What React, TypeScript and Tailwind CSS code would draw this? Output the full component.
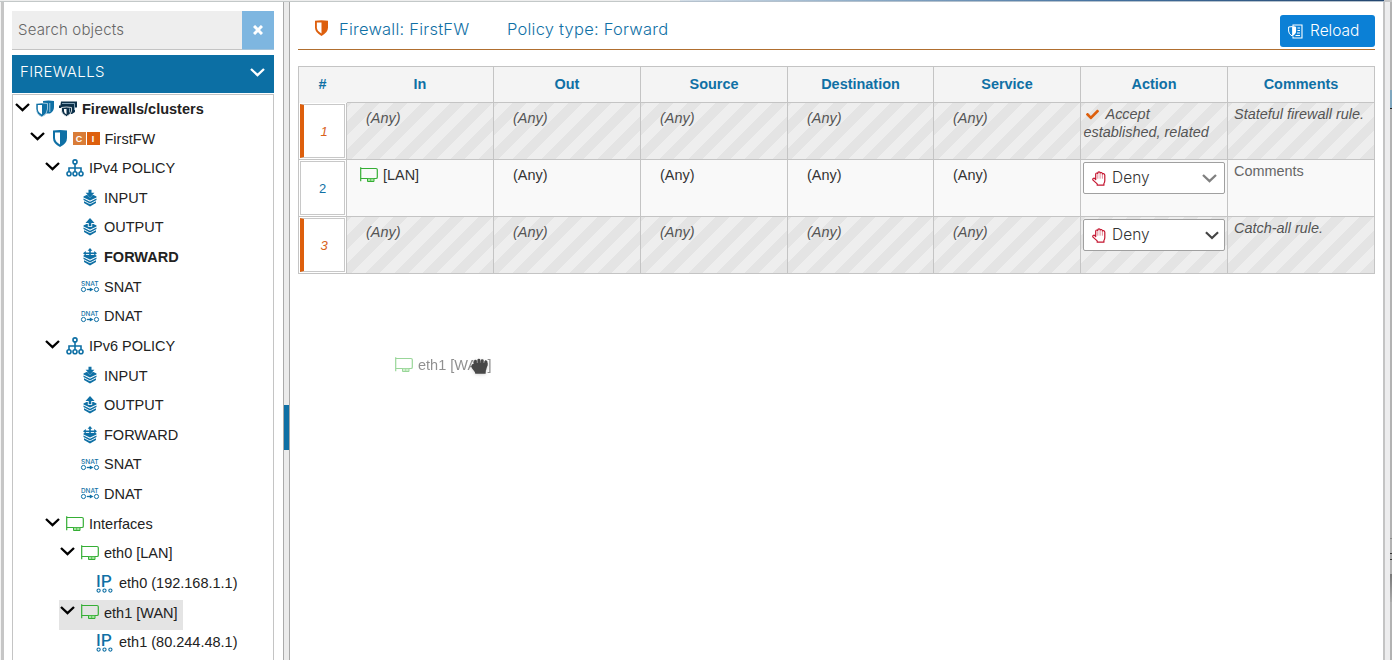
import type { ReactNode } from "react";
import { FaCheck } from "react-icons/fa";

const BLUE = "#0f70a5";

function Chevron({ className }: { className?: string }) {
  return (
    <svg viewBox="0 0 15 9" className={className} fill="none" stroke="currentColor" strokeWidth="2.3">
      <path d="M1 1l6.5 6.2L14 1" />
    </svg>
  );
}

function Shield({ color, className }: { color: string; className?: string }) {
  return (
    <svg viewBox="0 0 14 17" className={className}>
      <path d="M0 .6Q7-.4 14 .6V8q0 5.5-7 9Q0 13.500 0 8z" fill={color} />
      <path d="M2 2.500h5v12Q2 11.500 2 8z" fill="#fff" />
    </svg>
  );
}

function FirewallsIcon() {
  return (
    <svg viewBox="0 0 18 17" className="h-[17px] w-[18px]">
      <path d="M7 1q5.500-1 11 0v6q0 4-4 6.500H7z" fill={BLUE} />
      <path d="M13.800 3v9" stroke="#9cc6de" strokeWidth="1" />
      <path d="M0 3.500q6-1 11.500 0V9q0 5-5.700 8Q0 14 0 9z" fill={BLUE} stroke="#fff" strokeWidth=".6" />
      <path d="M1.800 5H6v9.500Q1.800 12 1.800 9z" fill="#fff" />
    </svg>
  );
}

function ClustersIcon() {
  return (
    <svg viewBox="0 0 18 17" className="h-[17px] w-[18px]">
      <path d="M2 1.500h16v6h-2V12l-3 2H5V8H1z" fill="#0c3049" />
      <path d="M3 3.500h12.500M15.500 3.500V10" stroke="#9fc0d4" strokeWidth=".8" fill="none" />
      <path d="M0 5.500h13V8H0z" fill="#0c3049" />
      <path d="M2.500 7.500q5-1 10 0V11q0 3-5 5.500-5-2.500-5-5.500z" fill="#0c3049" stroke="#fff" strokeWidth=".8" />
      <path d="M5 9h2.500v5.500Q5 13 5 11z" fill="#fff" />
      <path d="M10.500 8.500v4" stroke="#9fc0d4" strokeWidth=".8" />
    </svg>
  );
}

function SitemapIcon() {
  return (
    <svg viewBox="0 0 18 18" className="h-[18px] w-[18px]" fill="none" stroke={BLUE} strokeWidth="1.600">
      <circle cx="9" cy="2.900" r="2" />
      <path d="M9 5v8M3 13V9h12v4" />
      <circle cx="3" cy="14.800" r="2" />
      <circle cx="9" cy="14.800" r="2" />
      <circle cx="15" cy="14.800" r="2" />
    </svg>
  );
}

function ChainIcon({ kind }: { kind: "in" | "out" | "fwd" }) {
  return (
    <svg viewBox="0 0 14 18" className="h-[18px] w-[14px]">
      <path d="M1 12.200l6 3 6-3v1.800L7 17.500 1 14z" fill={BLUE} />
      <path d="M.5 9.500L7 12.700l6.500-3.200v1.600L7 14.400.5 11.100z" fill={BLUE} />
      <path d="M.5 7.500L3.500 6h7l3 1.500v.9L7 11.600.5 8.400z" fill={BLUE} />
      {kind === "in" && (
        <g>
          <path d="M5.500.8h3v3h2.900L7 8.400 2.600 3.800h2.900z" fill={BLUE} stroke="#fff" strokeWidth=".7" paintOrder="stroke" />
        </g>
      )}
      {kind === "out" && (
        <g>
          <path d="M4.800 4h4.400v4.800H4.800z" fill="#fff" />
          <path d="M5.700 4h2.600v4H5.700z" fill={BLUE} />
          <path d="M7 0l4.500 5h-9z" fill={BLUE} />
        </g>
      )}
      {kind === "fwd" && (
        <g fill={BLUE}>
          <path d="M2.500 5.900h9v1h-9z" fill="#fff" />
          <path d="M6.200 1.500h1.600v8H6.200zM2 4.400h10V6H2z" />
          <path d="M7 0l2.400 2.800H4.600zM0 5.200l2.800-2.300v4.600zM14 5.200l-2.800-2.300v4.600z" />
        </g>
      )}
    </svg>
  );
}

function NatIcon({ label }: { label: string }) {
  return (
    <svg viewBox="0 0 18 13" className="h-[13px] w-[18px] overflow-visible">
      <text x="0" y="5.600" fontSize="6.500" fontWeight="500" textLength="17.500" lengthAdjust="spacingAndGlyphs" fill={BLUE} className="font-['Inter',sans-serif]">
        {label}
      </text>
      <g fill="none" stroke={BLUE} strokeWidth="1">
        <circle cx="2.500" cy="9.500" r="2.100" />
        <circle cx="15.500" cy="9.500" r="2.100" />
        <path d="M5.800 9.500h4" strokeWidth="1.300" />
      </g>
      <path d="M8.800 7.400l3.700 2.100-3.700 2.100z" fill={BLUE} />
    </svg>
  );
}

function NicIcon() {
  return (
    <svg viewBox="0 0 18 16" className="h-4 w-[18px]" fill="none" stroke="#35ae35">
      <path d="M.7.3v14" strokeWidth="1.200" />
      <path d="M.7 1.500h15.300q1.300 0 1.300 1.300v7.400q0 1.300-1.300 1.300H.7" strokeWidth="1.200" />
      <path d="M7.500 11.800v2.700h6.500v-2.700" fill="#a5e5a0" strokeWidth="1" />
      <path d="M10.700 11.800v2.700" strokeWidth=".7" />
    </svg>
  );
}

function IpIcon() {
  return (
    <svg viewBox="0 -4 18 24" className="h-6 w-[18px] overflow-visible">
      <text x="0" y="12" fontSize="16" fontWeight="500" textLength="16" lengthAdjust="spacingAndGlyphs" fill={BLUE} className="font-['Inter',sans-serif]">
        IP
      </text>
      <g fill="none" stroke={BLUE} strokeWidth="1.100">
        <circle cx="2.600" cy="15.600" r="1.600" />
        <circle cx="8.500" cy="15.600" r="1.600" />
        <circle cx="14.400" cy="15.600" r="1.600" />
      </g>
    </svg>
  );
}

function ReloadIcon() {
  return (
    <svg viewBox="0 0 15 15" className="h-[15px] w-[15px]" fill="none" stroke="#fff">
      <path d="M5 2.500V1h9v13H5v-1.500" strokeWidth="1.100" />
      <path d="M9.500 4H12M9.500 6.500H12M9 9h3M7.500 11.500H12" strokeWidth="1" />
      <path d="M.6 3q3.500-.8 7 0v4q0 3-3.500 5Q.6 10 .6 7z" strokeWidth="1" />
      <path d="M4.100 3H8v4q0 3-3.900 5z" fill="#fff" stroke="none" />
    </svg>
  );
}

function StopHandIcon() {
  return (
    <svg viewBox="0 0 14 15" className="mr-[6px] h-[15px] w-[14px]" fill="none" stroke="#c4142f" strokeLinejoin="round" strokeLinecap="round">
      <path d="M3.700 8.500V3.200q0-1.200 1-1.200t1 .4Q5.800.8 7 .8t1.300 1.100q.3-.5 1.100-.4 1 .2 1 1.500.3-.4 1-.3 1.400.2 1.400 1.600v5.200q0 1.800-.9 3v1.700H5.200v-1.300L1 9.100Q.4 8 1.300 7.400q.9-.5 1.700.4z" strokeWidth="1.200" />
      <path d="M5.800 3v4.300M8.100 2.500v4.800M10.400 3.500v3.800" strokeWidth=".5" />
    </svg>
  );
}

function GrabCursor() {
  return (
    <svg viewBox="0 0 17 17" className="absolute left-[471px] top-[358px] h-[17px] w-[17px] drop-shadow" fill="#484848">
      <path d="M3 5h13.500q.2 3.200-1 5.300-.9 1.500-.9 5.500H4.300q-.1-1.700-1.400-3.100Q.3 10 .3 8.300q0-1.800 1.400-2.300H3z" />
      <rect x="3" y="1.800" width="2.900" height="6" rx="1.400" />
      <rect x="6.400" y=".7" width="2.900" height="6" rx="1.400" />
      <rect x="9.800" y="1.200" width="2.900" height="6" rx="1.400" />
      <rect x="13.200" y="2.400" width="3.300" height="6" rx="1.500" />
    </svg>
  );
}

type Row = { level: number; text: string; icon: ReactNode; open?: boolean; bold?: boolean; selected?: boolean };

const policy: Row[] = [
  { level: 3, text: "INPUT", icon: <ChainIcon kind="in" /> },
  { level: 3, text: "OUTPUT", icon: <ChainIcon kind="out" /> },
  { level: 3, text: "FORWARD", icon: <ChainIcon kind="fwd" /> },
  { level: 3, text: "SNAT", icon: <NatIcon label="SNAT" /> },
  { level: 3, text: "DNAT", icon: <NatIcon label="DNAT" /> },
];

const rows: Row[] = [
  { level: 0, text: "Firewalls/clusters", open: true, bold: true, icon: <span className="flex gap-[5px]"><FirewallsIcon /><ClustersIcon /></span> },
  {
    level: 1, text: "FirstFW", open: true,
    icon: (
      <span className="flex items-center">
        <Shield color={BLUE} className="ml-[1.500px] h-[17px] w-[14px]" />
        <span className="ml-[6px] flex gap-px text-center text-[9px] font-bold leading-[14px] text-white">
          <span className="h-[13px] w-[13px] bg-[#d97c37]">C</span>
          <span className="h-[13px] w-[13px] bg-[#dd5f0d]">I</span>
        </span>
      </span>
    ),
  },
  { level: 2, text: "IPv4 POLICY", open: true, icon: <SitemapIcon /> },
  ...policy.map((r) => ({ ...r, bold: r.text === "FORWARD" })),
  { level: 2, text: "IPv6 POLICY", open: true, icon: <SitemapIcon /> },
  ...policy,
  { level: 2, text: "Interfaces", open: true, icon: <NicIcon /> },
  { level: 3, text: "eth0 [LAN]", open: true, icon: <NicIcon /> },
  { level: 4, text: "eth0 (192.168.1.1)", icon: <IpIcon /> },
  { level: 3, text: "eth1 [WAN]", open: true, selected: true, icon: <NicIcon /> },
  { level: 4, text: "eth1 (80.244.48.1)", icon: <IpIcon /> },
];

const indent = ["ml-px", "ml-4", "ml-[31px]", "ml-[46px]", "ml-[61px]"];

function TreeRow({ row }: { row: Row }) {
  return (
    <div className={`${indent[row.level]} flex h-[29.630px] w-fit shrink-0 items-start whitespace-nowrap pl-px pr-[5px] ${row.selected ? "bg-[#e4e4e4]" : ""}`}>
      <span className="mr-px flex h-[22px] w-5 items-center">{row.open && <Chevron className="h-[9px] w-[15px] text-black" />}</span>
      <span className="mr-[5px] flex h-[25px] min-w-[18px] items-center justify-center">{row.icon}</span>
      <span className={`mt-[.650px] text-[14.500px] leading-[25px] text-[#222] ${row.bold ? "font-bold" : ""}`}>{row.text}</span>
    </div>
  );
}

function Sidebar() {
  return (
    <aside className="flex w-[279px] shrink-0 flex-col bg-white pl-2 pr-[9px] pt-[9px]">
      <div className="flex h-[39px] shrink-0">
        <div className="flex flex-1 items-center border-b border-[#c4c4c4] bg-[#eeeeee] pl-[6px] font-['Inter',sans-serif] text-[15px] font-light tracking-[.17px] text-[#666]">
          Search objects
        </div>
        <div className="flex w-8 items-center justify-center border-b border-[#a5c4da] bg-[#7eb6e0]">
          <svg viewBox="0 0 10 10" className="h-[10px] w-[10px]" stroke="#fff" strokeWidth="3">
            <path d="M1 1l8 8M9 1L1 9" />
          </svg>
        </div>
      </div>
      <div className="mt-[5px] flex h-[38px] shrink-0 items-center justify-between bg-[#0c6fa4] pb-1 pl-2 pr-[9px] font-['Inter',sans-serif] text-[15px] font-light text-white">
        <span className="tracking-[.4px]">FIREWALLS</span>
        <Chevron className="h-[9px] w-[15px]" />
      </div>
      <div className="mt-px flex min-h-0 flex-1 flex-col overflow-hidden border-x border-t border-[#c4c4c4] pt-[1.300px]">
        {rows.map((r, i) => (
          <TreeRow key={i} row={r} />
        ))}
      </div>
    </aside>
  );
}

const columns = ["In", "Out", "Source", "Destination", "Service", "Action", "Comments"];
const stripes = "bg-[repeating-linear-gradient(-45deg,#e4e4e4_0,#e4e4e4_10px,#eeeeee_10px,#eeeeee_20px)]";
const edge = "border-r border-b border-[#c4c4c4]";

function DenySelect({ dark }: { dark?: boolean }) {
  return (
    <div className="ml-[2px] mt-[2px] flex h-8 w-[142px] items-center rounded-[2px] border border-[#a0a0a0] bg-white pl-2 font-['Inter',sans-serif] text-[15.500px] font-light not-italic text-[#333]">
      <StopHandIcon />
      <span className="flex-1">Deny</span>
      <Chevron className={dark ? "mr-[5px] h-[9px] w-[14px] text-[#444]" : "mr-[7px] h-[9px] w-[15px] text-[#808080]"} />
    </div>
  );
}

function Rule({ n, comment }: { n: number; comment: string }) {
  const special = n !== 2;
  const cell = `${edge} h-[57px] ${special ? `${stripes} italic text-[#555]` : "bg-[#f9f9f9] text-[#333]"}`;
  return (
    <>
      <div className={`${edge} bg-white p-px`}>
        <div className={`flex h-full items-center justify-center border border-[#c8c8c8] pt-[2px] text-[13px] ${special ? "border-l-4 border-l-[#dd5f0d] italic text-[#d9621a]" : "text-[#0f70a5]"}`}>
          {n}
        </div>
      </div>
      {columns.slice(0, 5).map((c) => (
        <div key={c} className={`${cell} flex items-start leading-[17px] ${!special && c === "In" ? "pl-[13px] pt-[7px]" : "pl-[19px] pt-[7px]"}`}>
          {!special && c === "In" ? (
            <>
              <span className="mr-[5px]"><NicIcon /></span>[LAN]
            </>
          ) : (
            "(Any)"
          )}
        </div>
      ))}
      <div className={cell}>
        {n === 1 ? (
          <div className="pl-[2.500px] pt-[2px] leading-[18px]">
            <FaCheck className="ml-[2px] mr-[7px] inline h-[13px] w-[13px] align-[-2px] text-[#dd5f0d]" />
            Accept
            <br />
            established, related
          </div>
        ) : (
          <DenySelect dark={n === 3} />
        )}
      </div>
      <div className={`${cell} pl-[6px] pt-[2px] leading-[18px] ${special ? "" : "text-[#666]"}`}>{comment}</div>
    </>
  );
}

function Main() {
  return (
    <main className="flex min-w-0 flex-1 flex-col bg-white px-2">
      <div className="flex h-[47px] shrink-0 items-start">
        <div className="flex h-full flex-1 items-center pb-[2px] pl-[17px] pt-[10px] font-['Inter',sans-serif] text-[16.500px] font-light tracking-[.230px] text-[#0f70a5]">
          <Shield color="#dd5f0d" className="mb-[4px] mr-[11px] h-4 w-[13px]" />
          <span className="w-[168px]">Firewall: FirstFW</span>
          <span>Policy type: Forward</span>
        </div>
        <button className="mt-[13px] flex h-8 w-[95px] items-center rounded-[3px] bg-[#0b80d6] pl-2 font-['Inter',sans-serif] text-[15.500px] font-light text-white">
          <span className="mr-[7px]"><ReloadIcon /></span>Reload
        </button>
      </div>
      <div className="h-px shrink-0 bg-[#b06f30]" />
      <div className="mt-4 grid shrink-0 grid-cols-[48px_147px_147px_147px_146px_147px_147px_147px] border-l border-t border-[#c4c4c4] text-[14.450px]">
        <div className="flex h-9 items-center justify-center bg-[#f4f4f4] pr-px font-bold text-[#0f70a5]">#</div>
        {columns.map((c) => (
          <div key={c} className={`${edge} flex h-9 items-center justify-center bg-[#f4f4f4] font-bold text-[#0f70a5]`}>
            {c}
          </div>
        ))}
        <Rule n={1} comment="Stateful firewall rule." />
        <Rule n={2} comment="Comments" />
        <Rule n={3} comment="Catch-all rule." />
      </div>
    </main>
  );
}

export default function App() {
  return (
    <div className="relative flex h-[660px] w-[1392px] flex-col overflow-hidden bg-white font-['Liberation_Sans',Arial,sans-serif]">
      <div className="flex h-[2px] shrink-0">
        <div className="w-[680px] border-b border-[#c3c8c8] bg-[#eeeeee]" />
        <div className="w-[704px] border-b border-[#b4c1cd] bg-[linear-gradient(90deg,#d5dfe8,#8fadc8_25%,#44719f_60%,#23466f)]" />
        <div className="flex-1 bg-[#c8c8c8]" />
      </div>
      <div className="flex min-h-0 flex-1">
        <div className="w-px bg-[#f4f4f4]" />
        <div className="w-[3px] bg-[#c6c6c6]" />
        <Sidebar />
        <div className="w-px bg-[#aaaaaa]" />
        <div className="flex w-[5px] flex-col bg-[#ebebeb] pt-[403px]">
          <div className="h-[45px] bg-[#0f70a5]" />
        </div>
        <div className="w-px bg-[#a8a8a8]" />
        <Main />
        <div className="w-[2px] bg-[#c4c4c4]" />
        <div className="w-[5px] bg-[#ededee]" />
        <div className="flex w-[2px] flex-col bg-[#b2b2b2]">
          <div className="mt-[88px] h-[19px] border-b border-[#222] bg-[#7fa6bd]" />
          <div className="mt-[429px] h-px bg-[#888]" />
          <div className="mt-[14px] h-[7px] border-y border-[#333] bg-[#aaa]" />
          <div className="mt-[14px] h-7 bg-[linear-gradient(#777,#aaa)]" />
        </div>
      </div>

      <div className="absolute left-[395px] top-[357px] flex items-start gap-[5px] text-[14.500px] leading-[17px] text-[#222] opacity-50">
        <NicIcon />
        eth1 [WAN]
      </div>
      <GrabCursor />
    </div>
  );
}
